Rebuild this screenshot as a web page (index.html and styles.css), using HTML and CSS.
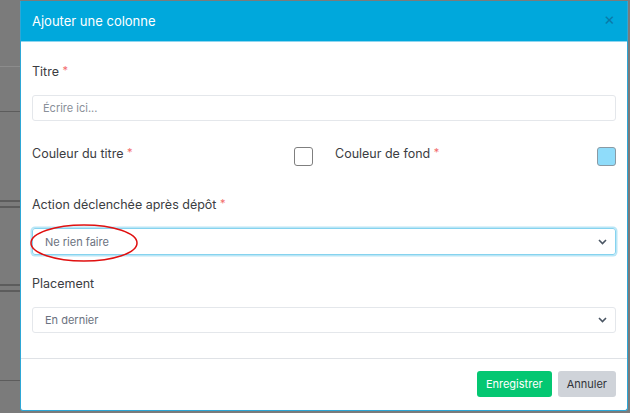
FILE: index.html
```html
<!DOCTYPE html>
<html lang="fr">
<head>
<meta charset="utf-8">
<link rel="stylesheet" href="styles.css">
</head>
<body>
<div class="backdrop-left">
  <div class="bl bl1"></div>
  <div class="bl bl2"></div>
  <div class="bl bl3"></div>
  <div class="bl bl4"></div>
  <div class="bl bl5"></div>
  <div class="bl bl6"></div>
  <div class="bl bl7"></div>
</div>
<div class="modal">
  <div class="modal-header">
    <span class="modal-title">Ajouter une colonne</span>
    <span class="close">×</span>
  </div>
  <div class="modal-body">
    <div class="label">Titre <span class="req">*</span></div>
    <div class="input placeholder">Écrire ici...</div>

    <div class="color-row">
      <div class="color-col">
        <span class="label">Couleur du titre <span class="req">*</span></span>
        <span class="swatch"></span>
      </div>
      <div class="color-col">
        <span class="label">Couleur de fond <span class="req">*</span></span>
        <span class="swatch swatch-blue"></span>
      </div>
    </div>

    <div class="label label-action">Action déclenchée après dépôt <span class="req">*</span></div>
    <div class="input select focus">
      <span>Ne rien faire</span>
      <svg class="chev" width="9" height="6" viewBox="0 0 9 6"><path d="M1 1l3.5 3.5L8 1" fill="none" stroke="#4a5563" stroke-width="1.6"/></svg>
      <svg class="annot" width="110" height="40" viewBox="0 0 110 40"><ellipse cx="55" cy="20" rx="53" ry="18" fill="none" stroke="#e01010" stroke-width="1.5"/></svg>
    </div>

    <div class="label label-place">Placement</div>
    <div class="input select">
      <span>En dernier</span>
      <svg class="chev" width="9" height="6" viewBox="0 0 9 6"><path d="M1 1l3.5 3.5L8 1" fill="none" stroke="#4a5563" stroke-width="1.6"/></svg>
    </div>
  </div>
  <div class="modal-footer">
    <button class="btn btn-save">Enregistrer</button>
    <button class="btn btn-cancel">Annuler</button>
  </div>
</div>
</body>
</html>
```

FILE: styles.css
```css
*, *::before, *::after { box-sizing: border-box; }
html, body {
  margin: 0;
  padding: 0;
}
body {
  width: 630px;
  height: 413px;
  background: #7b7b7b;
  display: flex;
  align-items: flex-start;
  font-family: Inter, "Noto Sans", sans-serif;
  overflow: hidden;
}
.backdrop-left {
  width: 20px;
  display: flex;
  flex-direction: column;
}
.bl { height: 1px; background: #5c5c5c; }
.bl1 { margin-top: 66px; background: #8c8c8c; }
.bl2 { margin-top: 44px; }
.bl3 { margin-top: 88px; height: 2px; }
.bl4 { margin-top: 4px; height: 2px; }
.bl5 { margin-top: 76px; height: 2px; }
.bl6 { margin-top: 4px; height: 2px; }
.bl7 { margin-top: 88px; }

.modal {
  margin-top: 1px;
  width: 608px;
  height: 410px;
  background: #fff;
  border: 1px solid #2ea7d6;
  border-top: none;
  border-radius: 0 0 3px 3px;
  display: flex;
  flex-direction: column;
}
.modal-header {
  height: 41px;
  flex: none;
  background: #00a8dc;
  border-bottom: 1px solid #8fd5ef;
  display: flex;
  align-items: center;
  justify-content: space-between;
  padding: 0 12px 0 11px;
}
.modal-title {
  color: #fff;
  font-size: 13px;
  letter-spacing: 0;
}
.close {
  color: #0a7aa8;
  font-size: 17px;
  line-height: 1;
  margin-top: -3px;
}
.modal-body {
  padding: 21px 11px 0 11px;
  height: 317px;
  flex: none;
  border-bottom: 1px solid #dfe2e6;
  display: flex;
  flex-direction: column;
}
.label {
  font-size: 12.5px;
  line-height: 18px;
  color: #3b3d42;
}
.req {
  color: #f26b6b;
  font-size: 11px;
  line-height: 0;
  vertical-align: 2px;
}
.input {
  margin-top: 14px;
  height: 26px;
  flex: none;
  border: 1px solid #e4e7eb;
  border-radius: 3px;
  display: flex;
  align-items: center;
  padding: 0 10px;
  font-size: 11px;
  color: #6b7280;
  position: relative;
}
.placeholder { color: #8a9099; }
.select { justify-content: space-between; padding: 0 8px 0 12px; }
.select.focus {
  height: 27px;
  border-color: #86d3ef;
  box-shadow: 0 0 0 1.5px #b9e6f6;
}
.chev { display: block; }
.annot {
  position: absolute;
  left: -4px;
  top: -6px;
}
.color-row {
  margin-top: 24px;
  display: flex;
  gap: 22px;
}
.color-col {
  flex: 1;
  display: flex;
  justify-content: space-between;
  align-items: flex-start;
}
.swatch {
  margin-top: 2px;
  width: 19px;
  height: 19px;
  border: 1px solid #7f7f7f;
  border-radius: 3px;
  background: #fff;
}
.swatch-blue {
  background: #8fdcfa;
  border-color: #8a9aa4;
}
.label-action { margin-top: 30px; }
.label-place { margin-top: 20px; }
.modal-footer {
  flex: 1;
  display: flex;
  justify-content: flex-end;
  align-items: flex-start;
  padding: 12px 11px 0 0;
  gap: 6px;
}
.btn {
  height: 26px;
  border: none;
  border-radius: 3px;
  font-family: Inter, "Noto Sans", sans-serif;
  font-size: 11px;
  padding: 0 9px;
}
.btn-save { background: #04c772; color: #fff; }
.btn-cancel { background: #cfd3d9; color: #2f3338; }
```
